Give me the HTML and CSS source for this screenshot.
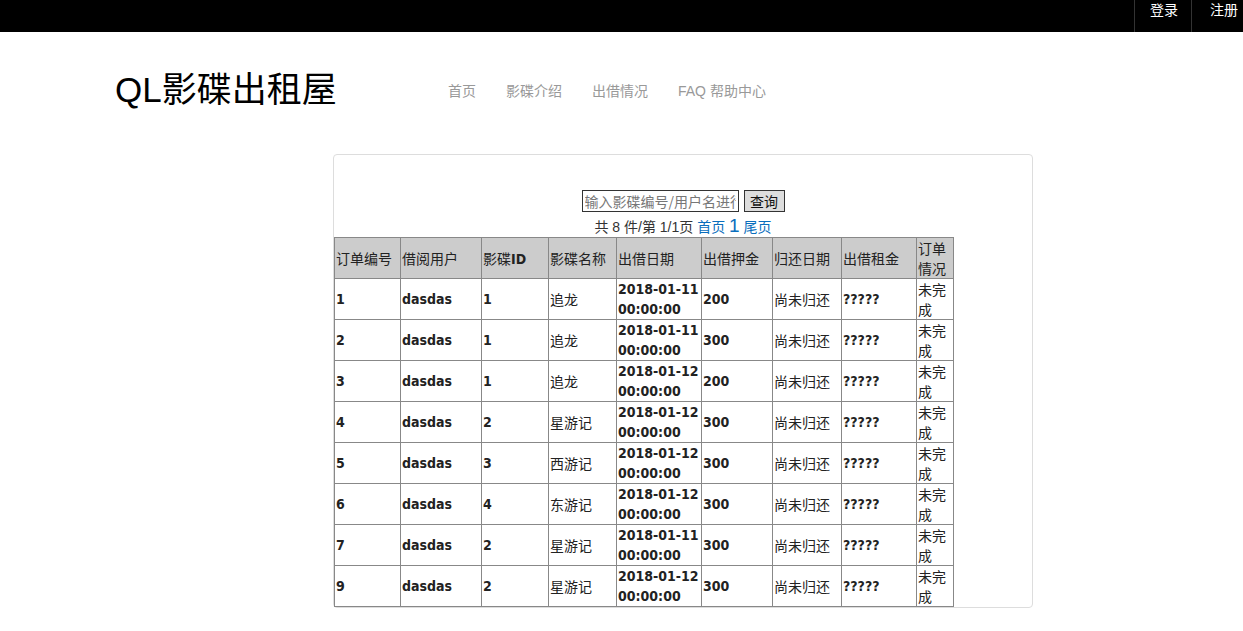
FILE: index.html
```html
<!DOCTYPE html>
<html lang="zh-CN">
<head>
<meta charset="utf-8">
<title>QL影碟出租屋</title>
<link rel="stylesheet" href="styles.css">
</head>
<body>
<div class="topbar">
  <a class="top-link" href="#">登录</a>
  <a class="top-link last" href="#">注册</a>
</div>
<div class="masthead">
  <div class="logo">QL影碟出租屋</div>
  <nav class="nav">
    <a href="#">首页</a>
    <a href="#">影碟介绍</a>
    <a href="#">出借情况</a>
    <a href="#">FAQ 帮助中心</a>
  </nav>
</div>
<div class="panel">
  <form class="search">
    <input class="search-input" type="text" placeholder="输入影碟编号/用户名进行查询">
    <button class="search-btn" type="button">查询</button>
  </form>
  <div class="pager">共 8 件/第 1/1页 <a href="#">首页</a> <span class="cur">1</span> <a href="#">尾页</a></div>
  <table class="orders">
    <colgroup>
      <col class="c1"><col class="c2"><col class="c3"><col class="c4"><col class="c5"><col class="c6"><col class="c7"><col class="c8"><col class="c9">
    </colgroup>
    <thead>
      <tr><th>订单编号</th><th>借阅用户</th><th>影碟<b>ID</b></th><th>影碟名称</th><th>出借日期</th><th>出借押金</th><th>归还日期</th><th>出借租金</th><th>订单情况</th></tr>
    </thead>
    <tbody>
      <tr><td>1</td><td>dasdas</td><td>1</td><td class="cn">追龙</td><td>2018-01-11 00:00:00</td><td>200</td><td class="cn">尚未归还</td><td>?????</td><td class="cn">未完成</td></tr>
      <tr><td>2</td><td>dasdas</td><td>1</td><td class="cn">追龙</td><td>2018-01-11 00:00:00</td><td>300</td><td class="cn">尚未归还</td><td>?????</td><td class="cn">未完成</td></tr>
      <tr><td>3</td><td>dasdas</td><td>1</td><td class="cn">追龙</td><td>2018-01-12 00:00:00</td><td>200</td><td class="cn">尚未归还</td><td>?????</td><td class="cn">未完成</td></tr>
      <tr><td>4</td><td>dasdas</td><td>2</td><td class="cn">星游记</td><td>2018-01-12 00:00:00</td><td>300</td><td class="cn">尚未归还</td><td>?????</td><td class="cn">未完成</td></tr>
      <tr><td>5</td><td>dasdas</td><td>3</td><td class="cn">西游记</td><td>2018-01-12 00:00:00</td><td>300</td><td class="cn">尚未归还</td><td>?????</td><td class="cn">未完成</td></tr>
      <tr><td>6</td><td>dasdas</td><td>4</td><td class="cn">东游记</td><td>2018-01-12 00:00:00</td><td>300</td><td class="cn">尚未归还</td><td>?????</td><td class="cn">未完成</td></tr>
      <tr><td>7</td><td>dasdas</td><td>2</td><td class="cn">星游记</td><td>2018-01-11 00:00:00</td><td>300</td><td class="cn">尚未归还</td><td>?????</td><td class="cn">未完成</td></tr>
      <tr><td>9</td><td>dasdas</td><td>2</td><td class="cn">星游记</td><td>2018-01-12 00:00:00</td><td>300</td><td class="cn">尚未归还</td><td>?????</td><td class="cn">未完成</td></tr>
    </tbody>
  </table>
</div>
</body>
</html>
```

FILE: styles.css
```css
* { box-sizing: border-box; }
body {
  margin: 0;
  font-family: "Liberation Sans", "Noto Sans CJK SC", sans-serif;
  font-size: 14px;
  color: #333;
  background: #fff;
}
a { text-decoration: none; }

.topbar {
  height: 32px;
  background: #000;
  display: flex;
  justify-content: flex-end;
}
.top-link {
  display: block;
  width: 57px;
  padding-left: 15px;
  padding-top: 1px;
  line-height: 16px;
  color: #fff;
  border-left: 1px solid #333;
  font-family: "Noto Sans CJK SC", sans-serif;
  font-size: 14px;
}
.top-link.last {
  width: 52px;
  padding-left: 18px;
}

.masthead {
  display: flex;
  align-items: center;
  padding-left: 115px;
  height: 122px;
  padding-bottom: 6px;
}
.logo {
  font-family: "Liberation Sans", "Noto Sans CJK SC", sans-serif;
  font-size: 35px;
  color: #000;
  width: 318px;
  margin-bottom: 8px;
}
.nav {
  display: flex;
}
.nav a {
  padding: 0 15px;
  color: #999;
  font-family: "Liberation Sans", "Noto Sans CJK SC", sans-serif;
  font-size: 14px;
}

.panel {
  width: 700px;
  margin-left: 333px;
  border: 1px solid #ddd;
  border-radius: 4px;
  height: 454px;
}
.search {
  display: flex;
  justify-content: center;
  gap: 5px;
  padding-top: 35px;
}
.search-input {
  width: 157px;
  height: 22px;
  border: 1px solid #333;
  padding: 0 2px;
  font-family: "Noto Sans CJK SC", sans-serif;
  font-size: 14px;
  color: #333;
}
.search-input::placeholder { color: #777; }
.search-btn {
  height: 22px;
  width: 41px;
  padding: 0;
  border: 1px solid #333;
  background: #ddd;
  font-family: "Noto Sans CJK SC", sans-serif;
  font-size: 14px;
  color: #111;
}
.pager {
  text-align: center;
  line-height: 22px;
  height: 25px;
  padding-top: 3px;
  font-family: "Liberation Sans", "Noto Sans CJK SC", sans-serif;
  color: #333;
}
.pager a { color: #0a6ebd; }
.pager .cur { font-size: 19px; color: #0a6ebd; }

.orders {
  width: 619px;
  table-layout: fixed;
  border-collapse: collapse;
  border: 1px solid #333;
  border-top-color: #555;
  font-family: "DejaVu Sans Condensed", "DejaVu Sans", "Noto Sans CJK SC", sans-serif;
  font-size: 14px;
  line-height: 20px;
  color: #222;
}
.c1 { width: 66px; }
.c2 { width: 81px; }
.c3 { width: 67px; }
.c4 { width: 68px; }
.c5 { width: 85px; }
.c6 { width: 71px; }
.c7 { width: 69px; }
.c8 { width: 75px; }
.c9 { width: 37px; }
.orders th, .orders td {
  border: 1px solid #888;
  padding: 0 0 0 1px;
  height: 41px;
  text-align: left;
  vertical-align: middle;
  word-break: break-all;
}
.orders th {
  background: #ccc;
  font-weight: normal;
  font-family: "Noto Sans CJK SC", sans-serif;
}
.orders th b { font-family: "DejaVu Sans Condensed", "DejaVu Sans", sans-serif; }
.orders td { font-weight: bold; }
.orders td.cn { font-weight: normal; font-family: "Noto Sans CJK SC", sans-serif; }
```
